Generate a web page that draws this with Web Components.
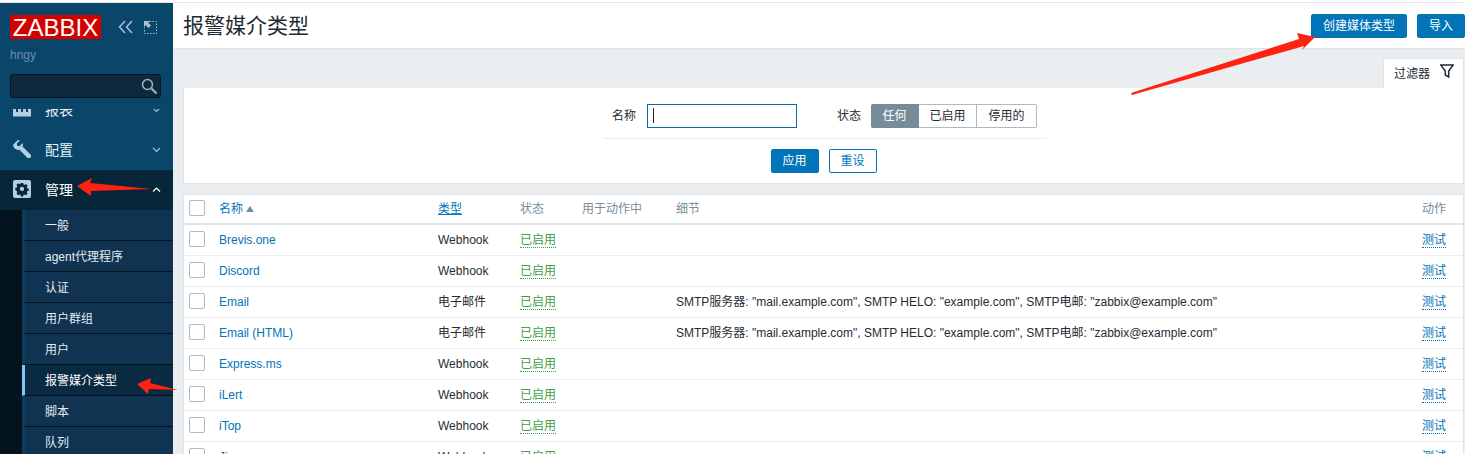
<!DOCTYPE html>
<html lang="zh">
<head>
<meta charset="utf-8">
<title>报警媒介类型</title>
<style>
    html, body {
        margin: 0;
        height: 454px;
        overflow: hidden;
        background: #ebeef0;
        font: 12px/14px "Liberation Sans", "Noto Sans CJK SC", sans-serif;
        color: #1f2c33;
    }
</style>
</head>
<body>
<zbx-page>
    <zbx-sidebar slot="side">
        <zbx-nav-item icon="reports" label="报表" style="margin-top:-19px"></zbx-nav-item>
        <zbx-nav-item icon="config" label="配置"></zbx-nav-item>
        <zbx-nav-item icon="admin" label="管理" open></zbx-nav-item>
        <zbx-sub-menu>
            <zbx-sub-item>一般</zbx-sub-item>
            <zbx-sub-item>agent代理程序</zbx-sub-item>
            <zbx-sub-item>认证</zbx-sub-item>
            <zbx-sub-item>用户群组</zbx-sub-item>
            <zbx-sub-item>用户</zbx-sub-item>
            <zbx-sub-item active>报警媒介类型</zbx-sub-item>
            <zbx-sub-item>脚本</zbx-sub-item>
            <zbx-sub-item>队列</zbx-sub-item>
        </zbx-sub-menu>
    </zbx-sidebar>
    <zbx-header title="报警媒介类型">
        <zbx-button kind="primary" style="width:96px">创建媒体类型</zbx-button>
        <zbx-button kind="primary" style="width:48px">导入</zbx-button>
    </zbx-header>
    <zbx-filter></zbx-filter>
    <zbx-table>
        <zbx-row name="Brevis.one" type="Webhook"></zbx-row>
        <zbx-row name="Discord" type="Webhook"></zbx-row>
        <zbx-row name="Email" type="电子邮件" details='SMTP服务器: "mail.example.com", SMTP HELO: "example.com", SMTP电邮: "zabbix@example.com"'></zbx-row>
        <zbx-row name="Email (HTML)" type="电子邮件" details='SMTP服务器: "mail.example.com", SMTP HELO: "example.com", SMTP电邮: "zabbix@example.com"'></zbx-row>
        <zbx-row name="Express.ms" type="Webhook"></zbx-row>
        <zbx-row name="iLert" type="Webhook"></zbx-row>
        <zbx-row name="iTop" type="Webhook"></zbx-row>
        <zbx-row name="Jira" type="Webhook"></zbx-row>
    </zbx-table>
    <zbx-arrows slot="over"></zbx-arrows>
</zbx-page>

<script>
const ICONS = {
    reports: `<svg width="18" height="18" viewBox="0 0 18 18"><path fill="#b4cfe2" d="M0 8h3v4h2V8h3v4h2V8h3v4h2V8h3v8.500H0z"/></svg>`,
    config: `<svg width="18" height="18" viewBox="0 0 18 18"><path fill="#b4cfe2" d="M5 .1a5 5 0 0 1 1.900.3L3.800 3.500l.4 2.300 2.300.4 3.100-3.100a5 5 0 0 1-.1 3.500l8 8a2 2 0 0 1 0 2.800l-.3.300a2 2 0 0 1-2.800 0l-8-8A5 5 0 0 1 .1 4.800z"/></svg>`,
    admin: `<svg width="18" height="18" viewBox="0 0 18 18"><rect width="18" height="18" rx="2" fill="#b4cfe2"/><path fill="#07263a" fill-rule="evenodd" d="M7.800 3h2.400l.3 1.600 1 .4 1.400-.9 1.700 1.700-.9 1.400.4 1 1.600.3v2.400l-1.600.3-.4 1 .9 1.400-1.700 1.700-1.400-.9-1 .4-.3 1.600H7.800l-.3-1.600-1-.4-1.400.9-1.700-1.700.9-1.400-.4-1L2.300 10V7.700l1.600-.3.4-1-.9-1.400 1.700-1.700 1.400.9 1-.4zM9 6.800a2.100 2.100 0 1 0 0 4.200 2.100 2.100 0 0 0 0-4.200z"/></svg>`
};

class ZbxPage extends HTMLElement {
    constructor() {
        super();
        this.attachShadow({mode: "open"});
        this.shadowRoot.innerHTML = `
        <style>
            :host {
                display: block;
                position: relative;
                height: 454px;
                overflow: hidden;
                background: #fff;
            }
            .top { height: 2px; background: #fff; border-bottom: 1px solid #e6e8ea; }
            .wrap { display: flex; height: 451px; }
            .main { flex: 1; min-width: 0; background: #ebeef0; overflow: hidden; }
        </style>
        <div class="top"></div>
        <div class="wrap">
            <slot name="side"></slot>
            <div class="main"><slot></slot></div>
        </div>
        <slot name="over"></slot>`;
    }
}

class ZbxSidebar extends HTMLElement {
    constructor() {
        super();
        this.attachShadow({mode: "open"});
        this.shadowRoot.innerHTML = `
        <style>
            :host {
                display: block;
                flex: 0 0 173px;
                width: 173px;
                background: #0a466a;
                overflow: hidden;
            }
            .head { display: flex; align-items: center; padding: 12px 0 0 10px; height: 24px; }
            .logo {
                width: 91px;
                height: 24px;
                background: #d40000;
                color: #fff;
                font-size: 24px;
                line-height: 25px;
                text-align: center;
            }
            .head svg { display: block; }
            .collapse { margin-left: 17px; }
            .expand { margin-left: 11px; }
            .user { color: #6a8fa8; padding: 9px 0 0 10px; height: 15px; line-height: 15px; }
            .search {
                margin: 11px 12px 0 10px;
                height: 22px;
                background: #0c2a3c;
                border: 1px solid #04141f;
                border-radius: 3px;
                display: flex;
                justify-content: flex-end;
                align-items: center;
                padding-right: 2px;
            }
            .menu { margin-top: 11px; height: 345px; overflow: hidden; }
        </style>
        <div class="head">
            <div class="logo">ZABBIX</div>
            <svg class="collapse" width="15" height="14" viewBox="0 0 15 14" fill="none" stroke="#a9c3d6" stroke-width="1.500"><path d="M7 1 1.500 7 7 13M14 1 8.500 7 14 13"/></svg>
            <svg class="expand" width="13" height="13" viewBox="0 0 13 13" fill="none" stroke="#a9c3d6"><path stroke-dasharray="1.500 1.500" d="M5.500.5h7v12H.5V6.500"/><path fill="#a9c3d6" stroke="none" d="M0 0h6L4.200 1.800 7 4.600 4.600 7 1.800 4.200 0 6z"/></svg>
        </div>
        <div class="user">hngy</div>
        <div class="search">
            <svg width="18" height="18" viewBox="0 0 18 18" fill="none" stroke="#9fb4c2" stroke-width="1.500"><circle cx="7.500" cy="7.500" r="5"/><path stroke-width="2.200" d="m11.500 11.500 5 5"/></svg>
        </div>
        <div class="menu"><slot></slot></div>`;
    }
}

class ZbxNavItem extends HTMLElement {
    connectedCallback() {
        if (this.shadowRoot) return;
        this.attachShadow({mode: "open"});
        const open = this.hasAttribute("open");
        const chevron = open ? "M1 5.500 4.500 2 8 5.500" : "M1 2l3.500 3.500L8 2";
        this.shadowRoot.innerHTML = `
        <style>
            :host {
                display: flex;
                align-items: center;
                height: 40px;
                padding-left: 13px;
                background: ${open ? "#07263a" : "transparent"};
                color: ${open ? "#fff" : "#e3edf4"};
                font-size: 14px;
                line-height: 16px;
            }
            svg { display: block; flex: none; }
            .icon { margin-top: -2px; }
            .label { margin-left: 14px; flex: 1; }
            .chev { margin-right: 12px; }
        </style>
        <span class="icon">${ICONS[this.getAttribute("icon")]}</span>
        <span class="label">${this.getAttribute("label")}</span>
        <svg class="chev" width="9" height="8" viewBox="0 0 9 8" fill="none" stroke="${open ? "#fff" : "#a9c3d6"}" stroke-width="1.200"><path d="${chevron}"/></svg>`;
    }
}

class ZbxSubMenu extends HTMLElement {
    constructor() {
        super();
        this.attachShadow({mode: "open"});
        this.shadowRoot.innerHTML = `
        <style>
            :host { display: block; background: #04141e; padding-left: 22px; height: 260px; }
        </style>
        <slot></slot>`;
    }
}

class ZbxSubItem extends HTMLElement {
    connectedCallback() {
        if (this.shadowRoot) return;
        this.attachShadow({mode: "open"});
        const active = this.hasAttribute("active");
        this.shadowRoot.innerHTML = `
        <style>
            :host {
                display: flex;
                align-items: center;
                height: 28px;
                padding: 2px 0 0 20px;
                border-left: 3px solid ${active ? "#7fc6f7" : "#123d5a"};
                border-bottom: 1px solid #04141e;
                background: ${active ? "#0a2a42" : "#0f3350"};
                color: ${active ? "#fff" : "#e3edf4"};
            }
        </style>
        <slot></slot>`;
    }
}

class ZbxHeader extends HTMLElement {
    connectedCallback() {
        if (this.shadowRoot) return;
        this.attachShadow({mode: "open"});
        this.shadowRoot.innerHTML = `
        <style>
            :host {
                display: flex;
                align-items: center;
                height: 46px;
                box-sizing: border-box;
                padding: 1px 0 0 10px;
                background: #fff;
                border-bottom: 1px solid #dfe4e7;
            }
            h1 {
                flex: 1;
                margin: 0;
                font-size: 21px;
                line-height: 24px;
                font-weight: normal;
                color: #1f2c33;
            }
            .actions { display: flex; gap: 10px; }
        </style>
        <h1>${this.getAttribute("title")}</h1>
        <div class="actions"><slot></slot></div>`;
    }
}

class ZbxButton extends HTMLElement {
    connectedCallback() {
        if (this.shadowRoot) return;
        this.attachShadow({mode: "open"});
        const outline = this.getAttribute("kind") !== "primary";
        this.shadowRoot.innerHTML = `
        <style>
            :host {
                display: flex;
                align-items: center;
                justify-content: center;
                height: 24px;
                box-sizing: border-box;
                border: 1px solid #0275b8;
                border-radius: 2px;
                background: ${outline ? "#fff" : "#0275b8"};
                color: ${outline ? "#0275b8" : "#fff"};
            }
        </style>
        <slot></slot>`;
    }
}

class ZbxFilter extends HTMLElement {
    constructor() {
        super();
        this.attachShadow({mode: "open"});
        this.shadowRoot.innerHTML = `
        <style>
            :host { display: block; margin: 9px 1px 0 10px; }
            .tabs { display: flex; justify-content: flex-end; }
            .tab {
                width: 81px;
                height: 30px;
                box-sizing: border-box;
                background: #fff;
                border: 1px solid #dfe4e7;
                border-bottom: 0;
                display: flex;
                align-items: center;
                padding-left: 10px;
                gap: 10px;
            }
            .tab svg { margin-top: -5px; }
            .panel {
                background: #fff;
                border: 1px solid #dfe4e7;
                border-top: 0;
                height: 96px;
                box-sizing: border-box;
                display: flex;
                flex-direction: column;
                align-items: center;
            }
            .row {
                width: 443px;
                height: 51px;
                box-sizing: border-box;
                margin-left: 2px;
                padding: 16px 0 0 9px;
                border-bottom: 1px solid #ebeef0;
                display: flex;
                align-items: flex-start;
            }
            label { line-height: 24px; }
            .input {
                width: 150px;
                height: 24px;
                box-sizing: border-box;
                border: 1px solid #0a6ca6;
                margin: 0 40px 0 11px;
                padding: 3px 5px;
            }
            .caret { display: block; width: 1px; height: 15px; background: #1f2c33; }
            .seg { display: flex; height: 24px; margin-left: 10px; }
            .seg span {
                display: flex;
                align-items: center;
                justify-content: center;
                box-sizing: border-box;
                border: 1px solid #acbbc2;
                border-left: 0;
            }
            .seg span:first-child {
                background: #768d99;
                border-color: #768d99;
                color: #fff;
                border-radius: 2px 0 0 2px;
            }
            .seg span:last-child { border-radius: 0 2px 2px 0; }
            .btns { display: flex; gap: 10px; margin-top: 10px; }
        </style>
        <div class="tabs">
            <div class="tab">
                <span>过滤器</span>
                <svg width="14" height="14" viewBox="0 0 14 14" fill="none" stroke="#1f2c33" stroke-width="1.500"><path d="M.7 1h12.600L8.700 7v6L5.300 11V7z"/></svg>
            </div>
        </div>
        <div class="panel">
            <div class="row">
                <label>名称</label>
                <div class="input"><span class="caret"></span></div>
                <label>状态</label>
                <div class="seg">
                    <span style="width:48px">任何</span>
                    <span style="width:58px">已启用</span>
                    <span style="width:60px">停用的</span>
                </div>
            </div>
            <div class="btns">
                <zbx-button kind="primary" style="width:48px">应用</zbx-button>
                <zbx-button style="width:48px">重设</zbx-button>
            </div>
        </div>`;
    }
}

const COLUMNS = "35px 219px 82px 62px 94px 1fr 41px";

class ZbxTable extends HTMLElement {
    constructor() {
        super();
        this.attachShadow({mode: "open"});
        this.shadowRoot.innerHTML = `
        <style>
            :host {
                display: block;
                margin: 10px 1px 0 10px;
                background: #fff;
                border: 1px solid #dfe4e7;
                border-bottom: 0;
            }
            .head {
                display: grid;
                grid-template-columns: ${COLUMNS};
                align-items: center;
                height: 28px;
                border-bottom: 2px solid #dfe4e7;
                color: #768d99;
            }
            .box {
                width: 16px;
                height: 16px;
                box-sizing: border-box;
                margin: -2px 0 0 5px;
                border: 1px solid #acbbc2;
                border-radius: 2px;
                background: #fff;
            }
            .link { color: #0275b8; }
            .sort { display: flex; align-items: center; }
            .sort i {
                margin-left: 3px;
                border: 4px solid transparent;
                border-top: 0;
                border-bottom: 6px solid #768d99;
            }
            u { text-underline-offset: 1px; }
        </style>
        <div class="head">
            <div class="box"></div>
            <div class="sort"><span class="link">名称</span><i></i></div>
            <div><u class="link">类型</u></div>
            <div>状态</div>
            <div>用于动作中</div>
            <div>细节</div>
            <div>动作</div>
        </div>
        <slot></slot>`;
    }
}

class ZbxRow extends HTMLElement {
    connectedCallback() {
        if (this.shadowRoot) return;
        this.attachShadow({mode: "open"});
        this.shadowRoot.innerHTML = `
        <style>
            :host {
                display: grid;
                grid-template-columns: ${COLUMNS};
                align-items: center;
                height: 30px;
                border-bottom: 1px solid #ebeef0;
                color: #1f2c33;
            }
            .box {
                width: 16px;
                height: 16px;
                box-sizing: border-box;
                margin: -2px 0 0 5px;
                border: 1px solid #acbbc2;
                border-radius: 2px;
            }
            .name { color: #0275b8; }
            .dotted { border-bottom: 1px dotted; display: inline-block; }
            .on { color: #429e47; }
            .test { color: #0275b8; }
        </style>
        <div class="box"></div>
        <div class="name">${this.getAttribute("name")}</div>
        <div>${this.getAttribute("type")}</div>
        <div><span class="dotted on">已启用</span></div>
        <div></div>
        <div>${this.getAttribute("details") || ""}</div>
        <div><span class="dotted test">测试</span></div>`;
    }
}

class ZbxArrows extends HTMLElement {
    constructor() {
        super();
        this.attachShadow({mode: "open"});
        this.shadowRoot.innerHTML = `
        <style>
            :host { position: absolute; left: 0; top: 0; width: 1465px; height: 454px; pointer-events: none; }
            svg { display: block; }
        </style>
        <svg width="1465" height="454" viewBox="0 0 1465 454" fill="#ff2211">
            <polygon points="1131,93 1299,39 1297,33 1315,37 1302,50 1304,46 1132,95"/>
            <polygon points="77,186 92,178 90,183 152,189 91,191 91,196"/>
            <polygon points="137,384 151,378 150,383 178,390 149,389 148,394"/>
        </svg>`;
    }
}

customElements.define('zbx-page', ZbxPage);
customElements.define('zbx-sidebar', ZbxSidebar);
customElements.define('zbx-nav-item', ZbxNavItem);
customElements.define('zbx-sub-menu', ZbxSubMenu);
customElements.define('zbx-sub-item', ZbxSubItem);
customElements.define('zbx-header', ZbxHeader);
customElements.define('zbx-button', ZbxButton);
customElements.define('zbx-filter', ZbxFilter);
customElements.define('zbx-table', ZbxTable);
customElements.define('zbx-row', ZbxRow);
customElements.define('zbx-arrows', ZbxArrows);
</script>
</body>
</html>
